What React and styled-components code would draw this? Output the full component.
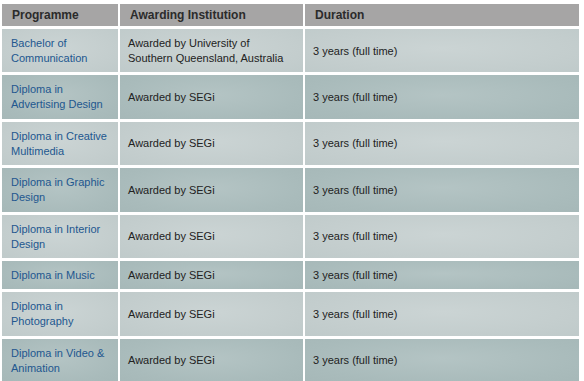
import React from "react";
import styled, { createGlobalStyle } from "styled-components";

const Global = createGlobalStyle`
  html, body { margin: 0; padding: 0; background: #ffffff; }
  body { font-family: "Liberation Sans", Arial, sans-serif; }
`;

const Wrap = styled.div`
  padding-top: 1px;
  width: 584px;
  height: 381px;
  overflow: hidden;
  background: #fff;
  box-sizing: border-box;
`;

const Table = styled.table`
  border-collapse: separate;
  border-spacing: 2px 3px;
  table-layout: fixed;
  width: 579px;
`;

const HeadCell = styled.th`
  background: #a6a5a5;
  color: #2b2b2b;
  font-size: 12px;
  font-weight: bold;
  text-align: left;
  height: 22px;
  padding: 0 0 0 10px;
  box-sizing: border-box;
  width: ${(p) => p.$w}px;
  vertical-align: middle;
`;

const Cell = styled.td`
  background: ${(p) =>
    p.$dark
      ? "radial-gradient(ellipse at 50% 45%, #b4c4c4 0%, #a9bbbb 70%, #a6b8b8 100%)"
      : "radial-gradient(ellipse at 50% 45%, #cbd4d4 0%, #c3cdcd 70%, #bfcaca 100%)"};
  font-size: 11px;
  line-height: 15px;
  padding: 7px 8px 6.4px ${(p) => (p.$first ? 9 : 8)}px;
  vertical-align: middle;
  color: #222;
`;

const Link = styled.a`
  color: #22578f;
  text-decoration: none;
`;

const rows = [
  ["Bachelor of", "Communication", "Awarded by University of", "Southern Queensland, Australia"],
  ["Diploma in", "Advertising Design", "Awarded by SEGi"],
  ["Diploma in Creative", "Multimedia", "Awarded by SEGi"],
  ["Diploma in Graphic", "Design", "Awarded by SEGi"],
  ["Diploma in Interior", "Design", "Awarded by SEGi"],
  ["Diploma in Music", null, "Awarded by SEGi"],
  ["Diploma in", "Photography", "Awarded by SEGi"],
  ["Diploma in Video &", "Animation", "Awarded by SEGi"],
];

export default function App() {
  return (
    <Wrap>
      <Global />
      <Table>
        <thead>
          <tr>
            <HeadCell $w={116}>Programme</HeadCell>
            <HeadCell $w={183}>Awarding Institution</HeadCell>
            <HeadCell $w={274}>Duration</HeadCell>
          </tr>
        </thead>
        <tbody>
          {rows.map((r, i) => (
            <tr key={i}>
              <Cell $first $dark={i % 2 === 1}>
                <Link href="#">
                  {r[0]}
                  {r[1] && <br />}
                  {r[1]}
                </Link>
              </Cell>
              <Cell $dark={i % 2 === 1}>
                {r[2]}
                {r[3] && <br />}
                {r[3]}
              </Cell>
              <Cell $dark={i % 2 === 1}>3 years (full time)</Cell>
            </tr>
          ))}
        </tbody>
      </Table>
    </Wrap>
  );
}
